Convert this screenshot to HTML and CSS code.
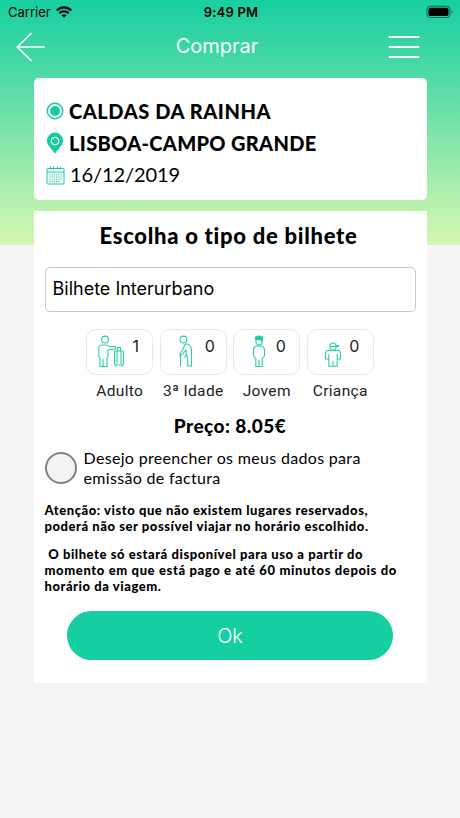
FILE: index.html
```html
<!DOCTYPE html>
<html lang="pt">
<head>
<meta charset="utf-8">
<title>Comprar</title>
<link rel="stylesheet" href="styles.css">
</head>
<body>
<div class="screen">
  <div class="status">
    <div class="carrier"><span>Carrier</span>
      <svg width="16" height="12" viewBox="0 0 16 12" fill="none" stroke="#000" stroke-width="2.2"><path d="M.8 4.400C5 .3 11 .3 15.200 4.400M3.300 7.200C6 4.600 10 4.600 12.700 7.200"/><path d="M8 11.800L5.500 9.300Q8 7.300 10.500 9.300Z" fill="#000" stroke="none"/></svg>
    </div>
    <div class="time">9:49 PM</div>
    <svg class="battery" width="28" height="14" viewBox="0 0 28 14"><rect x="1" y="1.200" width="23" height="11.300" rx="3" fill="none" stroke="#000" stroke-opacity=".5"/><rect x="2.500" y="2.700" width="20" height="8.300" rx="1.800"/><path d="M25.500 5v3.600q1.200-.6 1.200-1.800t-1.200-1.800" opacity=".5"/></svg>
  </div>
  <div class="nav">
    <svg width="30" height="30" viewBox="0 0 30 30" fill="none" stroke="#fff" stroke-width="1.700" stroke-linecap="round" stroke-linejoin="round"><path d="M15 1.500L1.200 15 15 28.500M1.200 15h27"/></svg>
    <h1>Comprar</h1>
    <svg width="32" height="26" viewBox="0 0 32 26" stroke="#fff" stroke-width="2" stroke-linecap="round"><path d="M1.500 3h29M1.500 13h29M1.500 23h29"/></svg>
  </div>
  <section class="trip">
    <div class="row">
      <svg width="18" height="18" viewBox="0 0 18 18"><circle cx="9" cy="9" r="7.700" fill="none" stroke="#16cda0" stroke-width="1.500"/><circle cx="9" cy="9" r="4.900" fill="#16cda0"/></svg>
      <span class="place from">CALDAS DA RAINHA</span>
    </div>
    <div class="row">
      <svg width="18" height="22" viewBox="0 0 18 22"><path d="M9 21.500C6 17 .9 13 .9 8.700a8.100 8.100 0 0 1 16.200 0C17.100 13 12 17 9 21.500Z" fill="#16cda0"/><circle cx="9" cy="9" r="3.700" fill="#16cda0" stroke="#fff" stroke-width="1.300"/></svg>
      <span class="place to">LISBOA-CAMPO GRANDE</span>
    </div>
    <div class="row">
      <svg width="19" height="19" viewBox="0 0 19 19" fill="none" stroke="#16cda0"><rect x="1" y="2.500" width="17" height="15.500" rx="1"/><path d="M1 6h17"/><path d="M4.500.5v3M7.500.5v3M11.500.5v3M14.500.5v3" stroke-width=".9"/><path d="M3.500 8.700h12.500M3.500 11h12.500M3.500 13.300h12.500M3.500 15.600h10" stroke-width="1.100" stroke-dasharray="1.200 1"/></svg>
      <span class="date">16/12/2019</span>
    </div>
  </section>
  <section class="ticket">
    <h2>Escolha o tipo de bilhete</h2>
    <div class="select">Bilhete Interurbano</div>
    <div class="types">
      <div class="type"><div class="box">
        <svg width="40" height="40" viewBox="0 0 40 40"><circle cx="14" cy="8.500" r="3.400"/><path d="M11 14h4.500l3.500 1.500h5.500v2.800h-6.500l-1 1v6l-1 2v8.200h-4V28v7.500h-3V27.500q-1.500-1-1.200-4v-5.500q0-4 3.200-4M23.500 21q0-1 1-1h7q1 0 1 1v12q0 1-1 1h-7q-1 0-1-1zM26 20v13M30 20v13M26.500 20v-3.500h3V20M25 34v1.800M31 34v1.800"/></svg><b>1</b></div><span>Adulto</span></div>
      <div class="type"><div class="box">
        <svg width="40" height="40" viewBox="0 0 40 40"><circle cx="18.500" cy="8.500" r="3.400"/><path d="M21.500 13q4.700 0 5 7v15h-3.800v-8l-1.500-3v-5l-3.200 3.500-2.500 2v11M21.500 13q-2 0-2.500 2.500L17.800 19 15 22.500v3M21 24l-1.500 3"/></svg><b>0</b></div><span>3ª Idade</span></div>
      <div class="type young"><div class="box">
        <svg width="40" height="40" viewBox="0 0 40 40"><path d="M22 8.500v2.500q0 2.500 3 3t3-3V8.500"/><path d="M21.500 9V6.300q3.500-2.500 7 0V10q-3-2-7-1" fill="#16cda0"/><path d="M22.800 15h4.400q3.300.5 3.300 4.500v5.500l-2.300 2.500v8h-6.400v-8l-2.300-2.500v-5.500q0-4 3.300-4.500M25 29v6"/></svg><b>0</b></div><span>Jovem</span></div>
      <div class="type child"><div class="box">
        <svg width="40" height="40" viewBox="0 0 40 40"><path d="M22 14.500q.3-2.500 3-2.500t3 2.500h2.500v1H22zM22 15.500v1.500q.8 2.300 3 2.300t3-2.300v-1.500M21.500 19.500h-1.500q-2.500 0-2.500 3V28h3.300v-5M28.500 19.500h1.500q2.500 0 2.500 3V28h-3.300v-5M21.500 19.500h7M20.800 28v7.300h8.400V28M25 30v5"/></svg><b>0</b></div><span>Criança</span></div>
    </div>
    <div class="price">Preço: 8.05€</div>
    <div class="invoice"><i class="check"></i><p>Desejo preencher os meus dados para<br>emissão de factura</p></div>
    <p class="note">Atenção: visto que não existem lugares reservados,<br>poderá não ser possível viajar no horário escolhido.</p>
    <p class="note">&nbsp;O bilhete só estará disponível para uso a partir do<br><span class="wide">momento em que está pago e até 60 minutos depois do</span><br>horário da viagem.</p>
    <button class="ok">Ok</button>
  </section>
</div>
</body>
</html>
```
FILE: styles.css
```css
* { box-sizing: border-box; }
body { margin: 0; background: #f6f5f3; color: #000; font-family: Lato, sans-serif; }
h1, h2, p { margin: 0; font-weight: 400; }
.screen { height: 818px; background: linear-gradient(#17cfa0, #4edaa5 75px, #b8f1ad 205px, #d2f7b0 245px, #f6f5f3 245px); overflow: hidden; }
.status { display: grid; grid-template-columns: 1fr 80px 1fr; align-items: center; height: 24px; padding: 0 6px 0 8px; font: 13px/24px Inter, sans-serif; }
.carrier { display: flex; align-items: center; gap: 5px; }
.time { text-align: center; font-weight: 600; letter-spacing: .2px; }
.battery { justify-self: end; }
.nav { display: flex; align-items: center; justify-content: space-between; height: 46px; padding: 0 40px 0 16px; color: #fff; }
.nav h1 { font: 20px/44px Inter, sans-serif; padding-bottom: 2px; }
.trip { width: 393px; height: 122px; margin: 8px 0 0 33.5px; padding: 17px 12.500px; background: #fff; border-radius: 5px; }
.row { display: flex; align-items: center; gap: 5px; height: 32px; }
.row svg { flex: none; }
.place { font-size: 20px; font-weight: 900; }
.from { letter-spacing: .56px; }
.to { letter-spacing: .32px; }
.date { font-size: 20px; letter-spacing: -.1px; line-height: 28px; padding-bottom: 2px; }
.ticket { width: 393px; height: 472px; margin: 11px 0 0 33.5px; padding: 10px 11px 0; background: #fff; }
.ticket h2 { height: 32px; font-size: 22px; line-height: 30px; font-weight: 900; text-align: center; letter-spacing: .72px; padding-right: 3px; }
.select { height: 45px; margin-top: 14px; padding-left: 7px; border: 1px solid #c9c9c9; border-radius: 5px; font: 18px/42px Inter, sans-serif; }
.types { display: flex; justify-content: center; gap: 6.500px; margin-top: 17px; }
.type { width: 67px; display: flex; flex-direction: column; align-items: center; font: 15.500px/32px Roboto, sans-serif; letter-spacing: .35px; color: #222; white-space: nowrap; }
.box { width: 67px; height: 46px; border: 1.500px solid #e9e9e9; border-radius: 10px; display: flex; justify-content: space-between; padding: 1px 13px 0 4px; }
.box svg { flex: none; fill: none; stroke: #2bd1a5; stroke-width: 1.100; stroke-linejoin: round; }
.young .box, .child .box { padding-left: 0; }
.box b { font: 16px/30px Inter, sans-serif; }
.price { height: 30px; margin-top: 4px; text-align: center; font-size: 19px; line-height: 29px; font-weight: 900; letter-spacing: .45px; }
.invoice { display: flex; align-items: center; gap: 7px; height: 40px; margin-top: 7px; font-size: 16px; line-height: 20px; letter-spacing: .32px; white-space: nowrap; }
.check { flex: none; width: 32px; height: 32px; border: 2px solid #828282; border-radius: 50%; background: #f3f3f3; }
.note { margin-top: 14px; font-size: 13px; line-height: 16px; font-weight: 900; letter-spacing: .56px; white-space: nowrap; }
.note + .note { margin-top: 12px; }
.wide { letter-spacing: .63px; }
.ok { display: block; width: 326px; height: 49px; margin: 17px auto 0; border: 0; border-radius: 25px; background: #15cfa0; color: #fff; font: 300 20px Inter, sans-serif; }
```
